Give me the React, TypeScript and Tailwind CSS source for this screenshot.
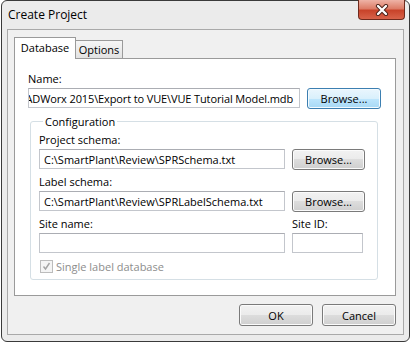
import React from 'react';

function WinButton({ label, className = '', focused = false }: { label: string; className?: string; focused?: boolean }) {
  return (
    <button
      className={`flex shrink-0 items-center justify-center rounded-[3px] border text-[11px] leading-none text-black ${
        focused
          ? 'border-[#3c7fb1] bg-[linear-gradient(#eaf6fd_0%,#d9f0fc_50%,#bee6fd_50%,#a7d9f5_100%)] shadow-[inset_0_0_0_1px_#f4fbff]'
          : 'border-[#7a7a7a] bg-[linear-gradient(#f2f2f2_0%,#ebebeb_50%,#dddddd_50%,#cfcfcf_100%)] shadow-[inset_0_0_0_1px_#fbfbfb]'
      } ${className}`}
    >
      {label}
    </button>
  );
}

function TextBox({ value = '', className = '', alignEnd = false }: { value?: string; className?: string; alignEnd?: boolean }) {
  return (
    <div
      className={`flex h-[20px] shrink-0 items-center overflow-hidden border border-[#c3c6cc] border-t-[#abadb3] bg-white whitespace-nowrap ${
        alignEnd ? 'justify-end pr-[6px] tracking-[-0.12px]' : 'pl-[4px]'
      } ${className}`}
    >
      <span className="shrink-0">{value}</span>
    </div>
  );
}

export default function App() {
  return (
    <div className="h-[342px] w-[411px] bg-white font-['Open_Sans',sans-serif] text-[11px] leading-[15px] text-black">
      <div className="ml-px flex h-[342px] w-[409px] flex-col rounded-[6px] border border-[#3a3a3a] bg-[#ebebeb] px-[5px] pb-[6px]">
        {/* title bar */}
        <div className="flex h-[28px] shrink-0 items-start justify-between">
          <span className="pl-px pt-[6px] text-[12px] leading-[16px]">Create Project</span>
          <div className="-mr-px -mt-px flex h-[20px] w-[47px] items-center justify-center rounded-b-[4px] border border-t-0 border-[#6f2a1d] bg-[linear-gradient(#eeb3a6_0%,#dd7c67_45%,#c8432a_55%,#d8634a_100%)]">
            <svg width="14" height="12" viewBox="0 0 14 12">
              <path d="M3 2 L11 10 M11 2 L3 10" stroke="#4a2018" strokeWidth="4.2" strokeLinecap="round" fill="none" />
              <path d="M3 2 L11 10 M11 2 L3 10" stroke="#ffffff" strokeWidth="2.4" strokeLinecap="round" fill="none" />
            </svg>
          </div>
        </div>

        {/* client area */}
        <div className="flex flex-1 flex-col border border-[#a9a9a9] bg-[#f0f0f0] pl-[6px] pr-[7px] pt-[7px]">
          {/* tabs */}
          <div className="flex h-[21px] items-end">
            <div className="relative z-10 -mb-px flex h-[22px] w-[62px] items-center justify-center border border-b-0 border-[#9a9a9a] bg-white pb-[2px]">
              Database
            </div>
            <div className="flex h-[18px] w-[47px] items-center justify-center border border-b-0 border-l-0 border-[#9a9a9a] bg-[linear-gradient(#f6f6f6,#e2e2e2)]">
              Options
            </div>
          </div>

          {/* tab panel */}
          <div className="h-[238px] border border-[#9a9a9a] bg-white px-[13px] pt-[12px]">
            <div className="h-[15px]">Name:</div>
            <div className="mt-[2px] flex gap-[7px]">
              <TextBox
                alignEnd
                className="w-[272px]"
                value="C:\Users\Public\Documents\Intergraph\CADWorx 2015\Export to VUE\VUE Tutorial Model.mdb"
              />
              <WinButton focused label="Browse..." className="h-[21px] w-[74px]" />
            </div>

            <fieldset className="ml-[2px] mt-[5px] w-[348px] rounded-[3px] border border-[#d5dfe5] pb-[5px] pl-[8px] pt-[3px]">
              <legend className="ml-[4px] px-[2px] leading-[15px]">Configuration</legend>

              <div className="h-[15px]">Project schema:</div>
              <div className="mt-[2px] flex gap-[7px]">
                <TextBox className="w-[246px]" value="C:\SmartPlant\Review\SPRSchema.txt" />
                <WinButton label="Browse..." className="h-[21px] w-[73px]" />
              </div>

              <div className="mt-[4px] h-[15px]">Label schema:</div>
              <div className="mt-[2px] flex gap-[7px]">
                <TextBox className="w-[246px]" value="C:\SmartPlant\Review\SPRLabelSchema.txt" />
                <WinButton label="Browse..." className="h-[21px] w-[73px]" />
              </div>

              <div className="mt-[4px] flex h-[15px] gap-[7px]">
                <div className="w-[246px]">Site name:</div>
                <div>Site ID:</div>
              </div>
              <div className="mt-[2px] flex gap-[7px]">
                <TextBox className="w-[246px]" />
                <TextBox className="w-[71px]" />
              </div>

              <div className="mt-[6px] flex h-[15px] items-center">
                <div className="ml-px flex h-[13px] w-[13px] items-center justify-center border border-[#bcbcbc] bg-[#f4f4f4]">
                  <svg width="9" height="9" viewBox="0 0 9 9">
                    <path d="M1.5 4.5 L3.5 7 L7.5 1" stroke="#a3a3a3" strokeWidth="1.4" fill="none" />
                  </svg>
                </div>
                <span className="ml-[3px] text-[#8d8d8d]">Single label database</span>
              </div>
            </fieldset>
          </div>

          {/* dialog buttons */}
          <div className="mt-[8px] flex justify-end gap-[9px]">
            <WinButton label="OK" className="h-[22px] w-[74px]" />
            <WinButton label="Cancel" className="h-[22px] w-[74px]" />
          </div>
        </div>
      </div>
    </div>
  );
}
